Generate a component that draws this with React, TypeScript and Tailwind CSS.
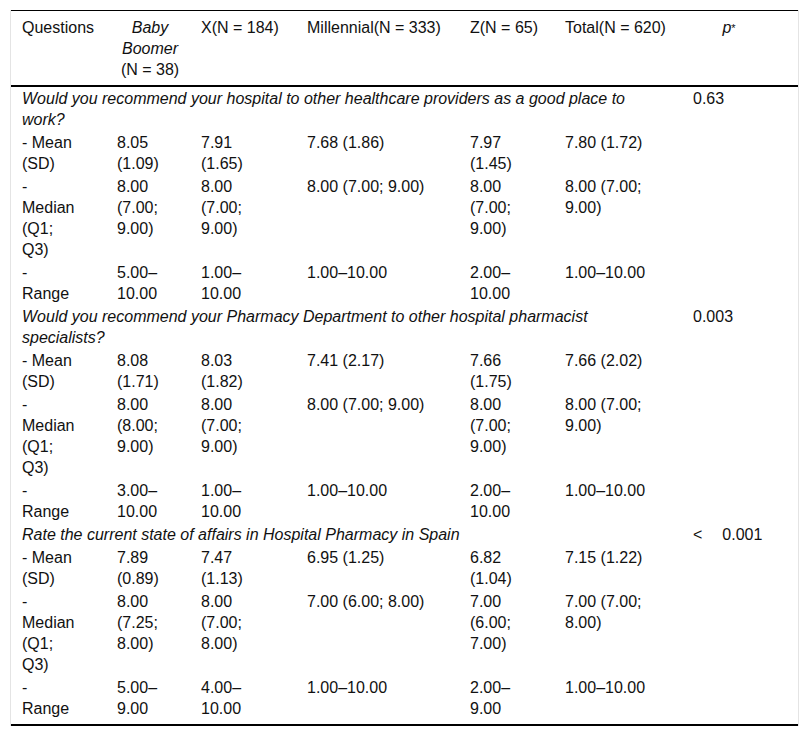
const sections = [
  {
    q: 'Would you recommend your hospital to other healthcare providers as a good place to work?',
    p: '0.63',
    rows: [
      ['- Mean (SD)', '8.05 (1.09)', '7.91 (1.65)', '7.68 (1.86)', '7.97 (1.45)', '7.80 (1.72)'],
      ['- Median (Q1; Q3)', '8.00 (7.00; 9.00)', '8.00 (7.00; 9.00)', '8.00 (7.00; 9.00)', '8.00 (7.00; 9.00)', '8.00 (7.00; 9.00)'],
      ['- Range', '5.00–10.00', '1.00–10.00', '1.00–10.00', '2.00–10.00', '1.00–10.00'],
    ],
  },
  {
    q: 'Would you recommend your Pharmacy Department to other hospital pharmacist specialists?',
    p: '0.003',
    rows: [
      ['- Mean (SD)', '8.08 (1.71)', '8.03 (1.82)', '7.41 (2.17)', '7.66 (1.75)', '7.66 (2.02)'],
      ['- Median (Q1; Q3)', '8.00 (8.00; 9.00)', '8.00 (7.00; 9.00)', '8.00 (7.00; 9.00)', '8.00 (7.00; 9.00)', '8.00 (7.00; 9.00)'],
      ['- Range', '3.00–10.00', '1.00–10.00', '1.00–10.00', '2.00–10.00', '1.00–10.00'],
    ],
  },
  {
    q: 'Rate the current state of affairs in Hospital Pharmacy in Spain',
    p: '<',
    rows: [
      ['- Mean (SD)', '7.89 (0.89)', '7.47 (1.13)', '6.95 (1.25)', '6.82 (1.04)', '7.15 (1.22)'],
      ['- Median (Q1; Q3)', '8.00 (7.25; 8.00)', '8.00 (7.00; 8.00)', '7.00 (6.00; 8.00)', '7.00 (6.00; 7.00)', '7.00 (7.00; 8.00)'],
      ['- Range', '5.00–9.00', '4.00–10.00', '1.00–10.00', '2.00–9.00', '1.00–10.00'],
    ],
  },
];

// right padding per column decides where the numbers wrap
const pads = [
  'pl-[11px] pr-[32px]',
  'pl-[11px] pr-[23px]',
  'pl-[11px] pr-[35px]',
  'pl-[11px] pr-[12px]',
  'pl-[11px] pr-[24px]',
  'pl-[11px] pr-[17px]',
];

const cols = ['w-[95px]', 'w-[84px]', 'w-[106px]', 'w-[163px]', 'w-[95px]', 'w-[128px]', 'w-[116px]'];

export default function App() {
  return (
    <div className="pt-[10px] pl-[10px] bg-white min-h-screen font-['Liberation_Sans',Arial,sans-serif] text-[16px] leading-[21px] text-[#111]">
      <div className="w-[789px] border-x border-[#e4e4e4]">
        <table className="w-[787px] table-fixed border-collapse border-t border-b-2 border-black">
          <colgroup>
            {cols.map((c, i) => (
              <col key={i} className={c} />
            ))}
          </colgroup>
          <thead>
            <tr className="border-b-2 border-black align-top">
              <th className="pl-[11px] pt-[6px] pb-[5px] text-left font-normal whitespace-nowrap">Questions</th>
              <th className="pl-[11px] pr-[7px] pt-[6px] pb-[5px] text-center font-normal">
                <i>Baby Boomer</i> <span className="whitespace-nowrap">(N = 38)</span>
              </th>
              <th className="pl-[11px] pt-[6px] pb-[5px] text-left font-normal whitespace-nowrap">X(N = 184)</th>
              <th className="pl-[11px] pt-[6px] pb-[5px] text-left font-normal whitespace-nowrap">Millennial(N = 333)</th>
              <th className="pl-[11px] pt-[6px] pb-[5px] text-left font-normal whitespace-nowrap">Z(N = 65)</th>
              <th className="pl-[11px] pt-[6px] pb-[5px] text-left font-normal whitespace-nowrap">Total(N = 620)</th>
              <th className="pl-[11px] pr-[33px] pt-[6px] pb-[5px] text-center font-normal">
                <i>p</i>
                <sup className="text-[11px] relative -top-[1px]">*</sup>
              </th>
            </tr>
          </thead>
          <tbody>
            {sections.map((s, si) => (
              <Section key={si} s={s} last={si === sections.length - 1} />
            ))}
          </tbody>
        </table>
      </div>
    </div>
  );
}

function Section({ s, last }: { s: (typeof sections)[number]; last: boolean }) {
  return (
    <>
      <tr className="align-top">
        <td colSpan={6} className="pl-[11px] pr-[40px] py-px italic">
          {s.q}
        </td>
        <td className="pl-[11px] py-px">
          {s.p === '<' ? (
            <>
              <span>&lt;</span>
              <span className="ml-[20px]">0.001</span>
            </>
          ) : (
            s.p
          )}
        </td>
      </tr>
      {s.rows.map((r, ri) => (
        <tr key={ri} className="align-top">
          {r.map((cell, ci) => (
            <td key={ci} className={`${pads[ci]} pt-px ${last && ri === 2 ? 'pb-[5px]' : 'pb-px'}`}>
              {cell}
            </td>
          ))}
          <td />
        </tr>
      ))}
    </>
  );
}
